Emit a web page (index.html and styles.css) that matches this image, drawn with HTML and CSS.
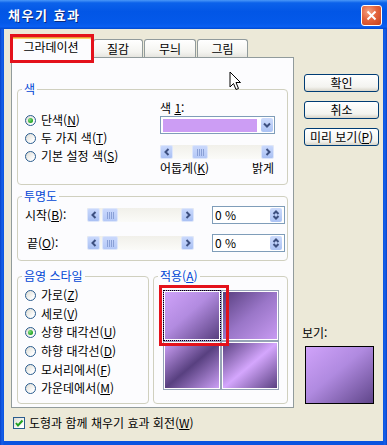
FILE: index.html
```html
<!DOCTYPE html>
<html lang="ko">

<head>
  <meta charset="UTF-8">
  <title>채우기 효과</title>
  <link rel="stylesheet" href="styles.css">
</head>

<body>

  <div class="window">
    <div class="titlebar">
      <span class="title">채우기 효과</span>
      <span class="close-btn">
        <svg width="11" height="11" viewBox="0 0 11 11"><path d="M1.5 1.5 L9.5 9.5 M9.5 1.5 L1.5 9.5" /></svg>
      </span>
    </div>

    <div class="frame">
      <div class="main">
        <div class="tabs">
          <div class="tab-strip">
            <div class="tab active">그라데이션</div>
            <div class="tab tab-2">질감</div>
            <div class="tab tab-3">무늬</div>
            <div class="tab tab-4">그림</div>
          </div>

          <div class="tab-page">
            <fieldset class="group">
              <legend>색</legend>
              <div class="color-body">
                <div class="radio-list color-radios">
                  <div class="radio-row"><span class="radio checked"></span>단색(<u>N</u>)</div>
                  <div class="radio-row"><span class="radio"></span>두 가지 색(<u>T</u>)</div>
                  <div class="radio-row"><span class="radio"></span>기본 설정 색(<u>S</u>)</div>
                </div>
                <div class="color-pick">
                  <div class="field-label">색 <u>1</u>:</div>
                  <div class="combo">
                    <span class="swatch"></span>
                    <span class="drop-btn">
                      <svg width="8" height="6" viewBox="0 0 8 6"><path d="M1 1.5 L4 4.5 L7 1.5" /></svg>
                    </span>
                  </div>
                  <div class="scrollbar shade-bar">
                    <span class="sb-btn"><svg width="6" height="8" viewBox="0 0 6 8"><path d="M4.5 1 L1.5 4 L4.5 7" /></svg></span>
                    <span class="sb-track"><span class="sb-thumb" style="margin-left: 19px"><span class="grip"></span></span></span>
                    <span class="sb-btn"><svg width="6" height="8" viewBox="0 0 6 8"><path d="M1.5 1 L4.5 4 L1.5 7" /></svg></span>
                  </div>
                  <div class="shade-labels">
                    <span>어둡게(<u>K</u>)</span>
                    <span>밝게</span>
                  </div>
                </div>
              </div>
            </fieldset>

            <fieldset class="group alpha-group">
              <legend>투명도</legend>
              <div class="alpha-body">
                <div class="alpha-row">
                  <span class="alpha-label">시작(<u>B</u>):</span>
                  <div class="scrollbar alpha-bar">
                    <span class="sb-btn"><svg width="6" height="8" viewBox="0 0 6 8"><path d="M4.5 1 L1.5 4 L4.5 7" /></svg></span>
                    <span class="sb-track"><span class="sb-thumb" style="margin-left: 2px"><span class="grip"></span></span></span>
                    <span class="sb-btn"><svg width="6" height="8" viewBox="0 0 6 8"><path d="M1.5 1 L4.5 4 L1.5 7" /></svg></span>
                  </div>
                  <div class="spin">
                    <span class="spin-value">0 %</span>
                    <span class="spin-btn">
                      <svg width="8" height="12" viewBox="0 0 8 12"><path d="M1.5 5 L4 2.5 L6.5 5 M1.5 7 L4 9.5 L6.5 7" /></svg>
                    </span>
                  </div>
                </div>
                <div class="alpha-row">
                  <span class="alpha-label end-label">끝(<u>O</u>):</span>
                  <div class="scrollbar alpha-bar">
                    <span class="sb-btn"><svg width="6" height="8" viewBox="0 0 6 8"><path d="M4.5 1 L1.5 4 L4.5 7" /></svg></span>
                    <span class="sb-track"><span class="sb-thumb" style="margin-left: 2px"><span class="grip"></span></span></span>
                    <span class="sb-btn"><svg width="6" height="8" viewBox="0 0 6 8"><path d="M1.5 1 L4.5 4 L1.5 7" /></svg></span>
                  </div>
                  <div class="spin">
                    <span class="spin-value">0 %</span>
                    <span class="spin-btn">
                      <svg width="8" height="12" viewBox="0 0 8 12"><path d="M1.5 5 L4 2.5 L6.5 5 M1.5 7 L4 9.5 L6.5 7" /></svg>
                    </span>
                  </div>
                </div>
              </div>
            </fieldset>

            <div class="bottom-row">
              <fieldset class="group style-group">
                <legend>음영 스타일</legend>
                <div class="radio-list style-radios">
                  <div class="radio-row"><span class="radio"></span>가로(<u>Z</u>)</div>
                  <div class="radio-row"><span class="radio"></span>세로(<u>V</u>)</div>
                  <div class="radio-row"><span class="radio checked"></span>상향 대각선(<u>U</u>)</div>
                  <div class="radio-row"><span class="radio"></span>하향 대각선(<u>D</u>)</div>
                  <div class="radio-row"><span class="radio"></span>모서리에서(<u>F</u>)</div>
                  <div class="radio-row"><span class="radio"></span>가운데에서(<u>M</u>)</div>
                </div>
              </fieldset>

              <fieldset class="group variant-group">
                <legend>적용(<u>A</u>)</legend>
                <div class="variants">
                  <div class="variant v1 selected"></div>
                  <div class="variant v2"></div>
                  <div class="variant v3"></div>
                  <div class="variant v4"></div>
                </div>
              </fieldset>
            </div>
          </div>
        </div>

        <div class="side">
          <div class="btn">확인</div>
          <div class="btn">취소</div>
          <div class="btn">미리 보기(<u>P</u>)</div>

          <div class="preview">
            <div class="preview-label">보기:</div>
            <div class="preview-box"></div>
          </div>
        </div>
      </div>

      <div class="footer">
        <span class="checkbox">
          <svg width="10" height="10" viewBox="0 0 10 10"><path d="M2 5 L4 7.5 L8.5 2.5" /></svg>
        </span>
        <span>도형과 함께 채우기 효과 회전(<u>W</u>)</span>
      </div>
    </div>

    <svg class="cursor" width="14" height="21" viewBox="0 0 14 21">
      <path d="M1 1 L1 16 L4.5 12.5 L7 18.5 L9.5 17.5 L7 11.5 L11.5 11.5 Z" />
    </svg>
  </div>

</body>

</html>
```

FILE: styles.css
```css
* {
  box-sizing: border-box;
}

body {
  margin: 0;
  font-family: "Noto Sans CJK KR", "Noto Sans", sans-serif;
  font-size: 12px;
  line-height: 14px;
  color: #000;
  background: #fff;
}

u {
  text-underline-offset: 1px;
}

.window {
  position: relative;
  width: 387px;
  height: 445px;
  display: flex;
  flex-direction: column;
  background: linear-gradient(90deg, #0842c8 0, #1660ea 2px, #0a54e0 4px, #0a54e0 383px, #1660ea 385px, #0842c8 387px);
}

.titlebar {
  height: 29px;
  flex: none;
  display: flex;
  align-items: center;
  justify-content: space-between;
  padding: 0 5px 0 8px;
  background: linear-gradient(180deg, #4a98f8 0%, #0c62ea 10%, #0256e6 40%, #0459ea 80%, #0a5ff2 92%, #0049d0 100%);
}

.title {
  color: #fff;
  font-weight: bold;
  font-size: 13px;
  letter-spacing: 1.5px;
  text-shadow: 1px 1px 0 #0a2a80;
}

.close-btn {
  width: 21px;
  height: 21px;
  margin-top: 2px;
  display: flex;
  align-items: center;
  justify-content: center;
  border: 1px solid #fff;
  border-radius: 3px;
  background: radial-gradient(circle at 35% 30%, #f4a283 0%, #e4643d 45%, #c5401b 100%);
}

.close-btn path {
  stroke: #fff;
  stroke-width: 2;
}

.frame {
  flex: 1;
  margin: 0 4px 4px;
  background: #ece9d8;
  display: flex;
  flex-direction: column;
}

.main {
  display: flex;
  padding: 7px 4px 0 7px;
}

/* tabs */

.tabs {
  width: 283px;
  flex: none;
}

.tab-strip {
  display: flex;
  align-items: flex-end;
  height: 21px;
  gap: 1px;
  margin-left: -1px;
}

.tab {
  height: 18px;
  text-align: center;
  line-height: 17px;
  border: 1px solid #919b9c;
  border-bottom: none;
  border-radius: 3px 3px 0 0;
  background: linear-gradient(#fff, #f4f4f0 70%, #e6e5df);
}

.tab.active {
  position: relative;
  z-index: 2;
  width: 82px;
  height: 22px;
  margin-bottom: -1px;
  line-height: 18px;
  border-top: 2px solid #e59a34;
  box-shadow: inset 0 1px 0 #ffd36a;
  background: #fcfcfe;
}

.tab.active::after {
  content: "";
  position: absolute;
  top: -4px;
  left: -1px;
  right: -3px;
  bottom: -5px;
  border: 3px solid #e4121b;
}

.tab-2 {
  width: 50px;
}

.tab-3 {
  width: 52px;
}

.tab-4 {
  width: 51px;
}

.tab-page {
  height: 351px;
  padding: 24px 5px 0;
  border: 1px solid #919b9c;
  background: #fcfcfe;
}

/* group boxes */

.group {
  min-width: 0;
  margin: 0;
  padding: 0;
  border: 1px solid #d0d0bf;
  border-radius: 4px;
}

.group legend {
  margin-left: 4px;
  padding: 0 2px;
  line-height: 14px;
  color: #0046d5;
}

.color-body {
  display: flex;
  justify-content: space-between;
  padding: 5px 12px 9px 7px;
}

.radio-list {
  display: flex;
  flex-direction: column;
}

.color-radios {
  margin-top: 10px;
}

.radio-row {
  display: flex;
  align-items: center;
  height: 18px;
  white-space: nowrap;
}

.style-radios .radio-row {
  height: 18.6px;
}

.radio {
  width: 11px;
  height: 11px;
  margin-right: 5px;
  flex: none;
  display: flex;
  align-items: center;
  justify-content: center;
  border: 1px solid #2a5c8e;
  border-radius: 50%;
  background: linear-gradient(135deg, #dcdbd3, #fff 80%);
}

.radio.checked::after {
  content: "";
  width: 5px;
  height: 5px;
  border-radius: 50%;
  background: radial-gradient(circle at 35% 35%, #7fe07f, #21a121 70%);
}

.color-pick {
  width: 115px;
}

.combo {
  display: flex;
  align-items: center;
  height: 18px;
  margin-top: 1px;
  padding: 1px;
  border: 1px solid #7f9db9;
  background: #fff;
}

.swatch {
  width: 94px;
  height: 13px;
  margin-left: 1px;
  background: #cc9df4;
}

.drop-btn {
  width: 12px;
  height: 14px;
  margin-left: auto;
  display: flex;
  align-items: center;
  justify-content: center;
  border-radius: 2px;
  background: linear-gradient(#cddbfc, #abc2f4);
}

.drop-btn path,
.sb-btn path,
.spin-btn path {
  fill: none;
  stroke: #3d5080;
  stroke-width: 2;
}

/* scrollbars */

.scrollbar {
  display: flex;
  height: 14px;
  background: linear-gradient(#f1f0ea, #fbfbf8);
}

.shade-bar {
  width: 114px;
  margin-top: 11px;
}

.alpha-bar {
  width: 107px;
}

.sb-btn {
  width: 13px;
  flex: none;
  display: flex;
  align-items: center;
  justify-content: center;
  border: 1px solid #dde6fb;
  border-radius: 2px;
  background: linear-gradient(#c9d8fc, #a9c0f3);
}

.sb-track {
  flex: 1;
  display: flex;
}

.sb-thumb {
  width: 16px;
  display: flex;
  align-items: center;
  justify-content: center;
  border: 1px solid #dde6fb;
  border-radius: 2px;
  background: linear-gradient(#cad8fc, #b4c8f6);
}

.grip {
  width: 7px;
  height: 7px;
  background: repeating-linear-gradient(90deg, #8aa0d6 0 1px, transparent 1px 2px);
}

.shade-labels {
  display: flex;
  justify-content: space-between;
  margin-top: 2px;
  padding-right: 1px;
}

/* transparency */

.alpha-group {
  margin-top: 4px;
}

.alpha-body {
  display: flex;
  flex-direction: column;
  gap: 10px;
  padding: 3px 0 8px 7px;
}

.alpha-row {
  display: flex;
  align-items: center;
  height: 18px;
}

.alpha-label {
  width: 62px;
}

.end-label {
  padding-left: 2px;
}

.spin {
  width: 73px;
  height: 18px;
  margin-left: 18px;
  display: flex;
  align-items: center;
  padding: 0 2px;
  border: 1px solid #7f9db9;
  background: #fff;
}

.spin-btn {
  width: 12px;
  height: 14px;
  margin-left: auto;
  display: flex;
  align-items: center;
  justify-content: center;
  border-radius: 2px;
  background: linear-gradient(#cddbfc, #abc2f4);
}

/* shading style and variants */

.bottom-row {
  display: flex;
  gap: 4px;
  margin-top: 8px;
}

.style-group {
  width: 132px;
  height: 135px;
}

.style-radios {
  padding: 3px 0 0 7px;
}

.variant-group {
  width: 135px;
  height: 135px;
}

.variants {
  display: grid;
  grid-template-columns: 58px 58px;
  grid-template-rows: 51px 49px;
  padding: 7px 0 0 9px;
}

.variant {
  border: 1px solid #96a3b6;
  box-shadow: inset 0 0 0 1px #fff;
}

.v1 {
  background: linear-gradient(to bottom right, #d0a3fa 0%, #b28be0 45%, #553d7c 100%);
}

.v2 {
  background: linear-gradient(to bottom right, #553d7c 0%, #9a76c8 50%, #c99cf3 100%);
}

.v3 {
  background: linear-gradient(to bottom right, #d0a3fa 0%, #584080 50%, #d0a3fa 100%);
}

.v4 {
  background: linear-gradient(to bottom right, #553d7c 0%, #d4a6fd 50%, #553d7c 100%);
}

.variant.selected {
  position: relative;
  border: 1px dotted #000;
}

.variant.selected::after {
  content: "";
  position: absolute;
  top: -6px;
  left: -5px;
  right: -9px;
  bottom: -6px;
  border: 3px solid #e4121b;
}

/* right column */

.side {
  width: 75px;
  margin-left: 10px;
  display: flex;
  flex-direction: column;
  gap: 9px;
  padding: 38px 0 4px;
}

.btn {
  height: 18px;
  text-align: center;
  line-height: 16px;
  white-space: nowrap;
  border: 1px solid #003c74;
  border-radius: 3px;
  background: linear-gradient(#fff, #f3f3ef 75%, #d8d4c8);
}

.preview {
  margin-top: auto;
}

.preview-label {
  margin-left: -2px;
}

.preview-box {
  width: 69px;
  height: 58px;
  margin: 6px 0 0 1px;
  border: 1px solid #000;
  background: linear-gradient(to bottom right, #d0a3fa 0%, #b08ae0 45%, #60468a 100%);
}

/* footer */

.footer {
  display: flex;
  align-items: center;
  gap: 4px;
  height: 14px;
  margin-top: 8px;
  padding-left: 9px;
}

.checkbox {
  width: 12px;
  height: 12px;
  display: flex;
  align-items: center;
  justify-content: center;
  border: 1px solid #2a5c8e;
  background: linear-gradient(135deg, #dcdbd3, #fff 80%);
}

.checkbox path {
  fill: none;
  stroke: #21a121;
  stroke-width: 2;
}

.cursor {
  position: absolute;
  left: 229px;
  top: 71px;
}

.cursor path {
  fill: #fff;
  stroke: #000;
  stroke-width: 1;
}
```
